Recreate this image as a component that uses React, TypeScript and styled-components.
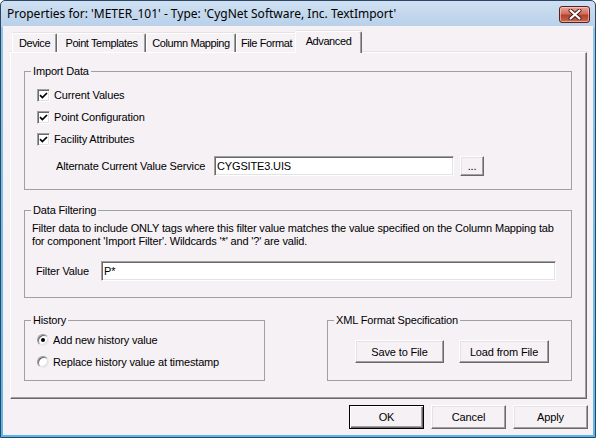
import React from 'react';
import styled, { createGlobalStyle } from 'styled-components';

const Global = createGlobalStyle`
  html, body { margin: 0; padding: 0; background: #ffffff; }
  body { font-family: "Liberation Sans", Arial, sans-serif; font-size: 11px; letter-spacing: -0.15px; color: #000; }
  * { box-sizing: border-box; }
`;

const Window = styled.div`
  width: 596px;
  height: 438px;
  border: 1px solid #2c4763;
  border-radius: 5px 5px 0 0;
  background: linear-gradient(#cfe0f2, #b8d0e9 26px, #8ec5ea 27px, #5ab6ea);
  display: flex;
  flex-direction: column;
  overflow: hidden;
`;

const TitleBar = styled.div`
  height: 25px;
  flex: none;
  display: flex;
  align-items: center;
  padding: 0 5px 0 6px;
  font-family: "Noto Sans", "Liberation Sans", sans-serif;
  font-size: 12px;
  letter-spacing: 0;
  color: #000;
`;

const TitleText = styled.div`
  flex: 1;
  white-space: nowrap;
  margin-top: -1px;
`;

const CloseButton = styled.div`
  width: 31px;
  height: 17px;
  margin-top: 2px;
  border: 1px solid #5c1f1f;
  border-radius: 3px;
  background: linear-gradient(#e6a49a, #d0705f 45%, #b5402d 55%, #c9694e);
  box-shadow: inset 0 0 0 1px rgba(255, 220, 210, 0.55);
  display: flex;
  align-items: center;
  justify-content: center;
`;

const Body = styled.div`
  flex: 1;
  margin: 0 2px 2px 2px;
  background: #f5f1f5;
  padding: 5px 6px 0 7px;
  display: flex;
  flex-direction: column;
`;

const TabStrip = styled.div`
  display: flex;
  align-items: flex-end;
  height: 22px;
  padding-left: 2px;
  position: relative;
  z-index: 2;
  margin-bottom: -1px;
`;

const Tab = styled.div<{ $active?: boolean; $w: number }>`
  width: ${(p) => (p.$active ? p.$w + 4 : p.$w)}px;
  height: ${(p) => (p.$active ? '22px' : '19px')};
  margin: ${(p) => (p.$active ? '0 -2px' : '0 0 1px 0')};
  display: flex;
  align-items: center;
  justify-content: center;
  padding-bottom: ${(p) => (p.$active ? '3px' : '1px')};
  background: #f5f1f5;
  border-top: 1px solid #ffffff;
  border-left: 1px solid #ffffff;
  border-right: 1px solid #696969;
  border-radius: 2px 2px 0 0;
  box-shadow: inset -1px 0 0 #a0a0a0, 0 -1px 0 #e3e3e3;
  white-space: nowrap;
  letter-spacing: -0.4px;
  position: relative;
  z-index: ${(p) => (p.$active ? 2 : 1)};
`;

const Panel = styled.div`
  width: 577px;
  height: 347px;
  border-top: 1px solid #ffffff;
  border-left: 1px solid #ffffff;
  border-right: 1px solid #696969;
  border-bottom: 1px solid #696969;
  box-shadow: inset -1px -1px 0 #a0a0a0, 0 -1px 0 #e3e3e3;
  display: flex;
  flex-direction: column;
  padding: 12px 0 0 13px;
  position: relative;
  z-index: 1;
`;

const Group = styled.fieldset<{ $w: number }>`
  width: ${(p) => p.$w}px;
  margin: 0;
  padding: 0;
  border: 1px solid #a0a0a0;
  min-inline-size: 0;
`;

const Legend = styled.legend`
  margin-left: 6px;
  padding: 0 2px;
  line-height: 13px;
  font-size: 11px;
`;

const GroupInner = styled.div<{ $pad: string }>`
  padding: ${(p) => p.$pad};
  display: flex;
  flex-direction: column;
`;

const CheckRow = styled.div`
  height: 22px;
  display: flex;
  align-items: center;
  gap: 4px;
`;

const Box = styled.div`
  width: 13px;
  height: 13px;
  background: #ffffff;
  border: 1px solid;
  border-color: #a0a0a0 #ffffff #ffffff #a0a0a0;
  box-shadow: inset 1px 1px 0 #696969, inset -1px -1px 0 #e3e3e3;
  display: flex;
  align-items: center;
  justify-content: center;
`;

const Radio = styled.div`
  width: 12px;
  height: 12px;
  border-radius: 50%;
  background: #ffffff;
  border: 1px solid;
  border-color: #9a9a9a #e8e8e8 #e8e8e8 #9a9a9a;
  box-shadow: inset 1px 1px 0 #6a6a6a, inset -1px -1px 0 #dcdcdc;
  display: flex;
  align-items: center;
  justify-content: center;
`;

const Dot = styled.div`
  width: 4px;
  height: 4px;
  border-radius: 50%;
  background: #000;
`;

const FieldRow = styled.div<{ $ml: number; $mt: number }>`
  display: flex;
  align-items: center;
  margin-left: ${(p) => p.$ml}px;
  margin-top: ${(p) => p.$mt}px;
  height: 20px;
`;

const FieldLabel = styled.div<{ $w: number }>`
  width: ${(p) => p.$w}px;
  flex: none;
  white-space: nowrap;
`;

const TextBox = styled.div<{ $w: number }>`
  width: ${(p) => p.$w}px;
  height: 20px;
  background: #ffffff;
  border: 1px solid;
  border-color: #a0a0a0 #ffffff #ffffff #a0a0a0;
  box-shadow: inset 1px 1px 0 #696969, inset -1px -1px 0 #e3e3e3;
  padding: 0 2px;
  display: flex;
  align-items: center;
  white-space: nowrap;
`;

const Button = styled.div<{ $w: number; $h: number; $default?: boolean }>`
  width: ${(p) => p.$w}px;
  height: ${(p) => p.$h}px;
  flex: none;
  background: #f5f1f5;
  border: 1px solid;
  border-color: ${(p) => (p.$default ? '#000000' : '#ffffff #696969 #696969 #ffffff')};
  box-shadow: ${(p) =>
    p.$default
      ? 'inset 1px 1px 0 #ffffff, inset -1px -1px 0 #696969, inset -2px -2px 0 #a0a0a0'
      : 'inset -1px -1px 0 #a0a0a0, inset 1px 1px 0 #e3e3e3'};
  display: flex;
  align-items: center;
  justify-content: center;
  white-space: nowrap;
`;

const Desc = styled.div`
  line-height: 13px;
  white-space: nowrap;
`;

const BottomRow = styled.div`
  display: flex;
  width: 578px;
  justify-content: flex-end;
  gap: 7px;
  margin-top: 6px;
`;

const SplitRow = styled.div`
  display: flex;
  gap: 62px;
  margin-top: 16px;
`;

const ButtonPair = styled.div`
  display: flex;
  gap: 15px;
`;

const Check = () => (
  <svg width="9" height="9" viewBox="0 0 9 9">
    <path d="M1 4.2 L3.4 6.6 L8 2" fill="none" stroke="#000" strokeWidth="1.7" />
  </svg>
);

const CloseX = () => (
  <svg width="14" height="11" viewBox="0 0 14 11">
    <path d="M2.5 1.5 L11.5 9.5 M11.5 1.5 L2.5 9.5" stroke="#4a1a14" strokeWidth="4" strokeLinecap="round" />
    <path d="M2.5 1.5 L11.5 9.5 M11.5 1.5 L2.5 9.5" stroke="#ffffff" strokeWidth="2.2" strokeLinecap="round" />
  </svg>
);

const CheckItem = ({ label }: { label: string }) => (
  <CheckRow>
    <Box>
      <Check />
    </Box>
    <span>{label}</span>
  </CheckRow>
);

const RadioItem = ({ label, on }: { label: string; on?: boolean }) => (
  <CheckRow>
    <Radio>{on && <Dot />}</Radio>
    <span>{label}</span>
  </CheckRow>
);

export default function App() {
  return (
    <>
      <Global />
      <Window>
        <TitleBar>
          <TitleText>Properties for: 'METER_101' - Type: 'CygNet Software, Inc. TextImport'</TitleText>
          <CloseButton>
            <CloseX />
          </CloseButton>
        </TitleBar>
        <Body>
          <TabStrip>
            <Tab $w={45}>Device</Tab>
            <Tab $w={89}>Point Templates</Tab>
            <Tab $w={90}>Column Mapping</Tab>
            <Tab $w={61}>File Format</Tab>
            <Tab $w={63} $active>Advanced</Tab>
          </TabStrip>
          <Panel>
            <Group $w={548}>
              <Legend>Import Data</Legend>
              <GroupInner $pad="6px 12px 13px 12px">
                <CheckItem label="Current Values" />
                <CheckItem label="Point Configuration" />
                <CheckItem label="Facility Attributes" />
                <FieldRow $ml={19} $mt={6}>
                  <FieldLabel $w={158}>Alternate Current Value Service</FieldLabel>
                  <TextBox $w={240}>CYGSITE3.UIS</TextBox>
                  <Button $w={24} $h={20} style={{ marginLeft: 6 }}>...</Button>
                </FieldRow>
              </GroupInner>
            </Group>
            <Group $w={548} style={{ marginTop: 14 }}>
              <Legend>Data Filtering</Legend>
              <GroupInner $pad="5px 12px 16px 7px">
                <Desc>
                  Filter data to include ONLY tags where this filter value matches the value specified on the Column Mapping tab
                </Desc>
                <Desc>for component 'Import Filter'. Wildcards '*' and '?' are valid.</Desc>
                <FieldRow $ml={4} $mt={13}>
                  <FieldLabel $w={65}>Filter Value</FieldLabel>
                  <TextBox $w={455}>P*</TextBox>
                </FieldRow>
              </GroupInner>
            </Group>
            <SplitRow>
              <Group $w={241}>
                <Legend>History</Legend>
                <GroupInner $pad="2px 12px 6px 12px">
                  <RadioItem label="Add new history value" on />
                  <RadioItem label="Replace history value at timestamp" />
                </GroupInner>
              </Group>
              <Group $w={245}>
                <Legend>XML Format Specification</Legend>
                <GroupInner $pad="13px 12px 17px 27px">
                  <ButtonPair>
                    <Button $w={89} $h={23}>Save to File</Button>
                    <Button $w={90} $h={23}>Load from File</Button>
                  </ButtonPair>
                </GroupInner>
              </Group>
            </SplitRow>
          </Panel>
          <BottomRow>
            <Button $w={75} $h={24} $default>OK</Button>
            <Button $w={75} $h={24}>Cancel</Button>
            <Button $w={75} $h={24}>Apply</Button>
          </BottomRow>
        </Body>
      </Window>
    </>
  );
}
